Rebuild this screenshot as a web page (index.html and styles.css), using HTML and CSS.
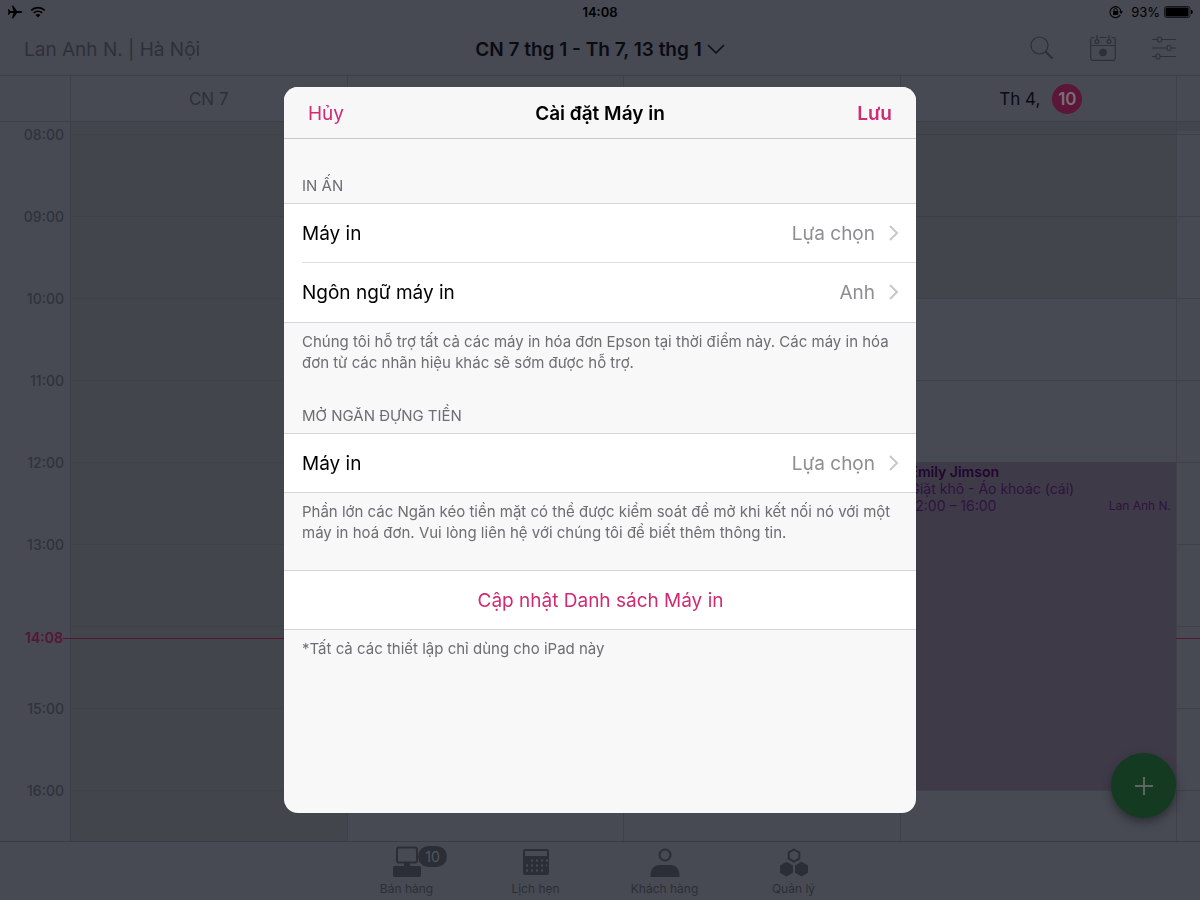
FILE: index.html
```html
<!DOCTYPE html>
<html lang="vi">
<head>
    <meta charset="UTF-8">
    <meta name="viewport" content="width=device-width, initial-scale=1.0">
    <title>Cài đặt Máy in</title>
    <link rel="stylesheet" href="styles.css">
</head>
<body>
    <div class="app">
        <div class="status-bar">
            <div class="status-side">
                <svg width="16" height="14" viewBox="0 0 16 14"><path d="M15.2 7c0-.7-.8-1.100-1.800-1.100H10L6.200.8H4.800l1.700 5.100H3.400L2 4.300H.9L1.500 7 .9 9.700H2l1.400-1.600h3.100l-1.700 5.100h1.400L10 8.100h3.400c1 0 1.800-.4 1.800-1.100z"/></svg>
                <svg width="16" height="12" viewBox="0 0 16 12" fill="none" stroke="#000" stroke-width="1.700"><path d="M1.200 4.400a9.800 9.800 0 0 1 13.600 0M3.700 7a6.200 6.200 0 0 1 8.600 0"/><path d="M8 11.500 5.600 9.100a3.400 3.400 0 0 1 4.800 0z" fill="#000" stroke="none"/></svg>
            </div>
            <div class="status-time">14:08</div>
            <div class="status-side status-right">
                <svg width="14" height="14" viewBox="0 0 14 14"><path d="M11.300 9.900A5.500 5.500 0 1 1 12 6.500" fill="none" stroke="#000" stroke-width="1.100"/><path d="M10 6.300h4l-2 2.700z"/><rect x="4" y="6" width="5.200" height="4" rx=".5"/><path d="M5 6.200V5a1.600 1.600 0 0 1 3.200 0v1.200" fill="none" stroke="#000"/></svg>
                <span>93%</span>
                <svg width="29" height="12" viewBox="0 0 29 12"><rect x=".5" y=".5" width="25.500" height="11" rx="2" fill="none" stroke="#15171c"/><rect x="1.500" y="1.500" width="23" height="9" rx="1"/><path d="M27 4v4c1.200-.2 1.800-1 1.800-2S28.200 4.200 27 4z"/></svg>
            </div>
        </div>

        <header class="top-bar">
            <div class="account">Lan Anh N. | Hà Nội</div>
            <button type="button" class="date-range">
                CN 7 thg 1 - Th 7, 13 thg 1
                <svg width="18" height="11" viewBox="0 0 18 11"><path d="M1 1l8 8 8-8" fill="none" stroke="currentColor" stroke-width="1.500"/></svg>
            </button>
            <div class="tools">
                <button type="button" aria-label="Tìm kiếm">
                    <svg width="24" height="24" viewBox="0 0 24 24" fill="none" stroke="currentColor"><circle cx="9.500" cy="9.500" r="8.500" stroke-width="1.200"/><path d="M15.500 15.500l7 7" stroke-width="2.200"/></svg>
                </button>
                <button type="button" aria-label="Hôm nay">
                    <svg width="26" height="26" viewBox="0 0 26 26" fill="none" stroke="currentColor" stroke-width="1.200"><path d="M4.500 2.500H3a2.300 2.300 0 0 0-2.300 2.300v18.400A2.300 2.300 0 0 0 3 25.400h20a2.300 2.300 0 0 0 2.300-2.300V4.800A2.300 2.300 0 0 0 23 2.500h-1.500M9.500 2.500h7M.7 10.500h24.600M7 .2v4.500M19 .2v4.500"/><circle cx="7" cy="6.500" r="1.900"/><circle cx="19" cy="6.500" r="1.900"/><circle cx="13" cy="17.500" r="3.800" fill="currentColor" stroke="none"/></svg>
                </button>
                <button type="button" aria-label="Bộ lọc">
                    <svg width="24" height="24" viewBox="0 0 24 24" fill="none" stroke="currentColor" stroke-width="1.200"><path d="M0 3.500h5.500M9.500 3.500H24M0 12h15M19 12h5M0 20.500h4M8 20.500h16"/><rect x="5.500" y="1" width="4" height="5" rx="1.800"/><rect x="15" y="9.500" width="4" height="5" rx="1.800"/><rect x="4" y="18" width="4" height="5" rx="1.800"/></svg>
                </button>
            </div>
        </header>

        <div class="days">
            <div class="gutter"></div>
            <div class="day muted">CN 7</div>
            <div class="day"></div>
            <div class="day"></div>
            <div class="day current">Th 4, <span class="today">10</span></div>
            <div class="day"></div>
        </div>

        <main class="calendar">
            <div class="gutter hours">
                <div>08:00</div>
                <div>09:00</div>
                <div>10:00</div>
                <div>11:00</div>
                <div>12:00</div>
                <div>13:00</div>
                <div></div>
                <div>15:00</div>
                <div>16:00</div>
            </div>
            <div class="column closed"></div>
            <div class="column"></div>
            <div class="column"></div>
            <div class="column">
                <div class="closed morning"></div>
                <div class="event">
                    <div class="event-name">Emily Jimson</div>
                    <div>Giặt khô - Áo khoác (cái)</div>
                    <div class="event-row"><span>12:00 – 16:00</span><span class="event-staff">Lan Anh N.</span></div>
                </div>
            </div>
            <div class="column">
                <div class="closed early"></div>
            </div>
            <div class="now">14:08</div>
            <button type="button" class="add-btn" aria-label="Thêm">
                <svg width="20" height="20" viewBox="0 0 20 20"><path d="M10 1v18M1 10h18" stroke="currentColor" stroke-width="2"/></svg>
            </button>
        </main>

        <nav class="tab-bar">
            <a href="#" class="tab">
                <svg width="30" height="32" viewBox="0 0 30 32"><rect x="5" y="1.500" width="20" height="15" rx="2" fill="none" stroke="currentColor" stroke-width="2"/><path d="M12 17h6v3h-6z" fill="currentColor"/><rect x="1" y="20" width="28" height="11" rx="2" fill="currentColor"/></svg>
                <span>Bán hàng</span>
                <span class="badge">10</span>
            </a>
            <a href="#" class="tab">
                <svg width="30" height="32" viewBox="0 0 30 32" fill="currentColor"><path fill-rule="evenodd" d="M4 3h22q2 0 2 2v22q0 2-2 2H4q-2 0-2-2V5q0-2 2-2zm0 2v5h22V5z"/><path d="M10 14.500h17M5 19.500h21M5 24.500h17" stroke="#474a52" stroke-width="2" stroke-dasharray="2 3"/></svg>
                <span>Lịch hẹn</span>
            </a>
            <a href="#" class="tab">
                <svg width="30" height="32" viewBox="0 0 30 32"><circle cx="15" cy="9" r="5.500" fill="none" stroke="currentColor" stroke-width="2"/><path d="M.5 31v-2c0-6 4-10 9-10h11c5 0 9 4 9 10v2z" fill="currentColor"/></svg>
                <span>Khách hàng</span>
            </a>
            <a href="#" class="tab">
                <svg width="30" height="32" viewBox="0 0 30 32" fill="currentColor"><path d="M15 3.500l5.300 3v6.200l-5.300 3-5.300-3V6.500z" fill="none" stroke="currentColor" stroke-width="2"/><path d="M7.500 15.800l6.500 3.600v7.300l-6.500 3.700L1 26.700v-7.300zM22.500 15.800l6.500 3.600v7.300l-6.500 3.700-6.500-3.700v-7.300z"/></svg>
                <span>Quản lý</span>
            </a>
        </nav>
    </div>

    <div class="overlay">
        <form class="modal" role="dialog" aria-labelledby="modalTitle">
            <div class="modal-header">
                <button type="button" class="cancel-btn">Hủy</button>
                <h1 id="modalTitle">Cài đặt Máy in</h1>
                <button type="submit" class="save-btn">Lưu</button>
            </div>

            <h2>IN ẤN</h2>
            <div class="list">
                <button type="button" class="row">
                    <span>Máy in</span>
                    <span class="value">Lựa chọn</span>
                    <svg width="10" height="16" viewBox="0 0 10 16"><path d="M1 1l7 7-7 7" fill="none" stroke="currentColor" stroke-width="2"/></svg>
                </button>
                <button type="button" class="row">
                    <span>Ngôn ngữ máy in</span>
                    <span class="value">Anh</span>
                    <svg width="10" height="16" viewBox="0 0 10 16"><path d="M1 1l7 7-7 7" fill="none" stroke="currentColor" stroke-width="2"/></svg>
                </button>
            </div>
            <p>Chúng tôi hỗ trợ tất cả các máy in hóa đơn Epson tại thời điểm này. Các máy in hóa đơn từ các nhãn hiệu khác sẽ sớm được hỗ trợ.</p>

            <h2>MỞ NGĂN ĐỰNG TIỀN</h2>
            <div class="list">
                <button type="button" class="row">
                    <span>Máy in</span>
                    <span class="value">Lựa chọn</span>
                    <svg width="10" height="16" viewBox="0 0 10 16"><path d="M1 1l7 7-7 7" fill="none" stroke="currentColor" stroke-width="2"/></svg>
                </button>
            </div>
            <p>Phần lớn các Ngăn kéo tiền mặt có thể được kiểm soát để mở khi kết nối nó với một máy in hoá đơn. Vui lòng liên hệ với chúng tôi để biết thêm thông tin.</p>

            <div class="list update">
                <button type="button" class="row update-btn">Cập nhật Danh sách Máy in</button>
            </div>
            <p>*Tất cả các thiết lập chỉ dùng cho iPad này</p>
        </form>
    </div>
</body>
</html>
```
FILE: styles.css
```css
* {
    margin: 0;
    padding: 0;
    box-sizing: border-box;
}

body {
    font-family: Inter, "Noto Sans", sans-serif;
    background: #474a52;
    color: #0a0c14;
}

button {
    font: inherit;
    color: inherit;
    background: none;
    border: none;
    cursor: pointer;
}

svg {
    display: block;
    flex: none;
}

.app {
    display: flex;
    flex-direction: column;
    height: 100vh;
    overflow: hidden;
}

/* Status bar */
.status-bar {
    display: flex;
    align-items: center;
    height: 24px;
    padding: 0 7px;
    color: #000;
    font-size: 13px;
}

.status-side {
    display: flex;
    flex: 1;
    align-items: center;
    gap: 7px;
}

.status-right {
    justify-content: flex-end;
    gap: 4px;
}

.status-right svg:first-child {
    margin-right: 4px;
}

.status-time {
    font-weight: 600;
}

/* Top bar */
.top-bar {
    display: flex;
    align-items: center;
    height: 52px;
    padding: 0 24px;
    border-bottom: 1px solid #3c3f47;
}

.account {
    flex: 1;
    color: #2d3039;
    font-size: 19px;
}

.date-range {
    display: flex;
    align-items: center;
    gap: 5px;
    font-size: 19px;
    font-weight: 600;
}

.tools {
    display: flex;
    flex: 1;
    align-items: center;
    justify-content: flex-end;
    gap: 36px;
    padding-bottom: 3px;
    color: #2d3039;
}

/* Calendar grid, shared by headings and columns */
.days,
.calendar {
    display: grid;
    grid-template-columns: 70px repeat(4, minmax(0, 277fr)) minmax(0, 24fr);
}

.days {
    height: 46px;
    border-bottom: 1px solid #3c3f47;
}

.day {
    display: flex;
    align-items: center;
    justify-content: center;
    gap: 12px;
    border-left: 1px solid #3e4149;
    font-size: 17px;
}

.muted {
    color: #2d3039;
}

.day.current {
    padding-left: 5px;
}

.today {
    width: 30px;
    border-radius: 50%;
    background: #5c1637;
    color: #777079;
    font-weight: 600;
    line-height: 30px;
    text-align: center;
}

.calendar {
    position: relative;
    flex: 1;
    grid-template-rows: minmax(0, 1fr);
    min-height: 0;
}

.hours {
    padding: 4px 6px 0 0;
    color: #2f323b;
    font-size: 14px;
    font-weight: 500;
    line-height: 18px;
    text-align: right;
}

.hours div {
    height: 82px;
}

.column {
    border-left: 1px solid #3e4149;
    background-image: linear-gradient(#3e4149 1px, transparent 1px);
    background-size: 100% 82px;
    background-position: 0 12px;
}

.closed {
    background-color: #42454c;
}

.morning,
.early {
    background-color: rgba(55, 58, 64, 0.3);
}

.morning {
    height: 176px;
}

.early {
    height: 9px;
}

.event {
    position: relative;
    z-index: 1;
    height: 328px;
    margin-top: 164px;
    padding: 1px 5px 0 9px;
    background: #3f3a48;
    color: #2e1240;
    font-size: 14px;
    line-height: 17px;
}

.event-name {
    color: #1f0630;
    font-weight: 600;
}

.event-row {
    display: flex;
    justify-content: space-between;
}

.event-staff {
    font-size: 12px;
}

.now {
    position: absolute;
    top: 507px;
    left: 0;
    right: 0;
    display: flex;
    align-items: center;
    padding-left: 25px;
    color: #571535;
    font-size: 14px;
    font-weight: 600;
    line-height: 18px;
}

.now::after {
    content: "";
    flex: 1;
    height: 1px;
    background: #571535;
}

.add-btn {
    position: absolute;
    right: 24px;
    bottom: 23px;
    z-index: 2;
    display: flex;
    align-items: center;
    justify-content: center;
    width: 65px;
    height: 65px;
    border-radius: 50%;
    background: #153a22;
    box-shadow: 0 4px 8px rgba(20, 20, 26, 0.5);
    color: #5e6663;
}

/* Tab bar */
.tab-bar {
    display: flex;
    justify-content: center;
    height: 59px;
    border-top: 1px solid #393c44;
    color: #2b2e37;
}

.tab {
    position: relative;
    display: flex;
    flex-direction: column;
    align-items: center;
    width: 129px;
    padding-top: 4px;
    color: inherit;
    font-size: 12px;
    line-height: 16px;
    text-decoration: none;
}

.tab svg {
    margin-bottom: 3px;
}

.badge {
    position: absolute;
    top: 4px;
    left: 76px;
    width: 29px;
    border-radius: 11px;
    background: #2b2e37;
    color: #53565e;
    font-size: 14px;
    line-height: 21px;
    text-align: center;
}

/* Printer settings */
.overlay {
    position: fixed;
    inset: 0;
    z-index: 10;
    display: flex;
    align-items: center;
    justify-content: center;
}

.modal {
    width: 100%;
    max-width: 632px;
    min-height: 726px;
    border-radius: 14px;
    background: #f8f8f9;
    color: #000;
    font-size: 19px;
    overflow: hidden;
}

.modal-header {
    display: flex;
    align-items: center;
    height: 52px;
    padding: 1px 24px 0;
    border-bottom: 1px solid #c9c9cb;
    background: #f7f7f7;
}

.modal-header button {
    flex: 1;
    color: #cf2a72;
    text-align: left;
}

.modal-header .save-btn {
    font-weight: 600;
    text-align: right;
}

h1 {
    font-size: 19px;
    font-weight: 600;
}

h2 {
    padding: 32px 18px 7px;
    color: #6d6d72;
    font-size: 15px;
    font-weight: 400;
    line-height: 21px;
}

.modal-header + h2 {
    padding-top: 36px;
}

.list {
    border-top: 1px solid #d5d6d9;
    border-bottom: 1px solid #d5d6d9;
    background: #fff;
}

.row {
    display: flex;
    align-items: center;
    width: 100%;
    height: 58px;
    padding: 0 17px 0 18px;
}

.row + .row {
    height: 60px;
    background: linear-gradient(#dedee0, #dedee0) 18px 0 / 100% 1px no-repeat;
}

.value {
    margin-left: auto;
    color: #8e8e93;
}

.row svg {
    margin-left: 14px;
    color: #c7c7cc;
}

.modal p {
    padding: 8px 18px 0;
    color: #6d6d72;
    font-size: 15px;
    line-height: 21px;
}

.update {
    margin-top: 27px;
}

.update-btn {
    justify-content: center;
    color: #cf2a72;
}
```
